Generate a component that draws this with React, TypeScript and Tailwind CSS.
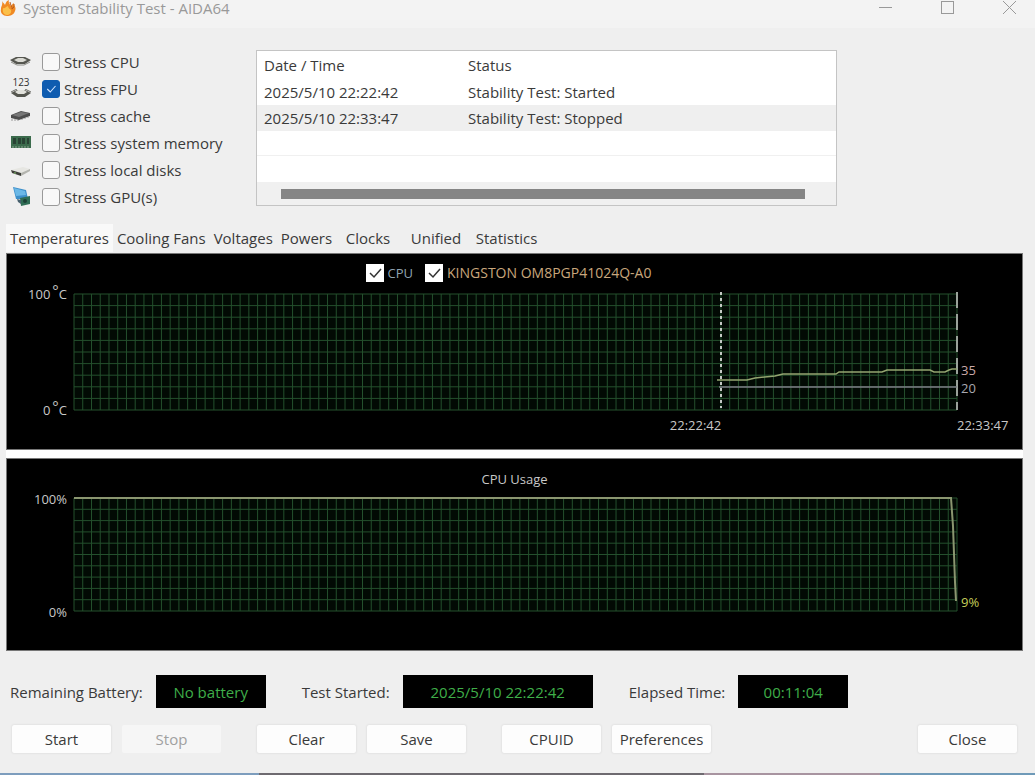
import React, { useState } from "react";
import clsx from "clsx";

const GRID_COLS = 101;
const GRID_ROWS = 10;

const tabs = [
  "Temperatures",
  "Cooling Fans",
  "Voltages",
  "Powers",
  "Clocks",
  "Unified",
  "Statistics",
];

const log = [
  { time: "2025/5/10 22:22:42", status: "Stability Test: Started" },
  { time: "2025/5/10 22:33:47", status: "Stability Test: Stopped" },
];

function FlameIcon() {
  return (
    <svg width="18" height="17" viewBox="0 0 18 17" aria-hidden="true">
      <path
        d="M2 1C3 3 4 3 5 5C6 3 6 1 9 0C8 3 10 4 11 6C12 5 12 4 14 3C13 5 17 7 15 11C14 15 10 16 7 16C3 16 0 13 1 9C1 6 3 5 2 1Z"
        fill="#f08a24"
      />
      <path
        d="M3 8C5 9 5 7 8 6C8 8 10 9 11 10C12 13 9 15 7 15C4 15 2 12 3 8Z"
        fill="#fbc04a"
      />
      <path d="M10 2C10 5 13 7 12 9C14 8 14 6 14 4" stroke="#b85a1c" fill="none" />
    </svg>
  );
}

function ChipIcon() {
  return (
    <svg width="22" height="20" viewBox="0 0 22 20" aria-hidden="true">
      <path d="M0 8L6 5H15L21 8L15 12H6Z" fill="#55564f" />
      <path d="M4 8L8 6H13L17 8L13 10H8Z" fill="#d9d9d2" />
      <path d="M1 10L7 13H14L20 10" stroke="#8b8c86" fill="none" />
    </svg>
  );
}

function FpuIcon() {
  return (
    <span className="flex h-[27px] w-[22px] flex-col items-center">
      <span className="text-[10px] leading-[14px] text-[#333]">123</span>
      <svg width="22" height="9" viewBox="0 0 22 9" aria-hidden="true">
        <path d="M1 3L7 0M21 3L15 0" stroke="#6c6d67" />
        <path d="M1 4L7 1H15L21 4L15 8H7Z" fill="#55564f" />
        <path d="M5 3L8 1H14L17 3L14 5H8Z" fill="#e2e2dc" />
      </svg>
    </span>
  );
}

function CacheIcon() {
  return (
    <svg width="22" height="20" viewBox="0 0 22 20" aria-hidden="true">
      <path d="M1 9L11 5L20 7V10L9 14L1 12Z" fill="#4d4d4d" />
      <path d="M2 9L11 6L19 7L9 11Z" fill="#777" />
      <path d="M2 13V15M5 13V15M8 14V15M12 13V14M15 12V13M18 11V12" stroke="#999" />
    </svg>
  );
}

function MemoryIcon() {
  return (
    <svg width="22" height="20" viewBox="0 0 22 20" aria-hidden="true">
      <rect x="1" y="3" width="20" height="12" fill="#3b6b4c" />
      <path d="M3 5H6V11H3ZM8 5H11V11H8ZM12 5H15V11H12ZM17 5H19V11H17Z" fill="#294334" />
      <path d="M2 14H20" stroke="#8aa58f" strokeDasharray="2 1" />
    </svg>
  );
}

function DiskIcon() {
  return (
    <svg width="22" height="20" viewBox="0 0 22 20" aria-hidden="true">
      <path d="M1 10L13 7L20 9L11 13Z" fill="#e6e6e2" />
      <path d="M11 13L20 9V11L11 16Z" fill="#b3b4ae" />
      <path d="M1 10L11 13V16L2 13Z" fill="#3f403b" />
      <path d="M4 13H6" stroke="#7fbf6a" />
    </svg>
  );
}

function GpuIcon() {
  return (
    <svg width="22" height="20" viewBox="0 0 22 20" aria-hidden="true">
      <path d="M3 0L16 3L18 12L6 12Z" fill="#3d8fca" />
      <path d="M4 1L15 4L16 8L6 9Z" fill="#6bb8e6" />
      <path d="M10 11L20 9V17L11 19Z" fill="#2f6d55" />
      <path d="M7 12L11 13V17L8 15Z" fill="#47606e" />
      <circle cx="15" cy="14" r="2" fill="#1c4136" />
    </svg>
  );
}

const stressItems = [
  { id: "cpu", label: "Stress CPU", icon: <ChipIcon /> },
  { id: "fpu", label: "Stress FPU", icon: <FpuIcon /> },
  { id: "cache", label: "Stress cache", icon: <CacheIcon /> },
  { id: "memory", label: "Stress system memory", icon: <MemoryIcon /> },
  { id: "disks", label: "Stress local disks", icon: <DiskIcon /> },
  { id: "gpu", label: "Stress GPU(s)", icon: <GpuIcon /> },
];

function Tick({ className }: { className: string }) {
  return (
    <svg
      viewBox="0 0 18 18"
      className={clsx("pointer-events-none col-start-1 row-start-1 size-[18px]", className)}
      aria-hidden="true"
    >
      <path d="M4 9L8 13L15 5" fill="none" stroke="currentColor" strokeWidth="1.5" />
    </svg>
  );
}

function Grid({ height, children }: { height: number; children: React.ReactNode }) {
  const cols = Array.from({ length: GRID_COLS + 1 }, (_, i) => (i * 883) / GRID_COLS);
  const rows = Array.from({ length: GRID_ROWS + 1 }, (_, i) => (i * height) / GRID_ROWS);
  return (
    <svg
      viewBox={`0 0 883 ${height}`}
      preserveAspectRatio="none"
      className="block w-full overflow-visible"
      style={{ height }}
      aria-hidden="true"
    >
      <rect width="883" height={height} fill="#020a04" />
      <path
        d={
          cols.map((x) => `M${x} 0V${height}`).join("") +
          rows.map((y) => `M0 ${y}H883`).join("")
        }
        stroke="#24502d"
        fill="none"
      />
      {children}
    </svg>
  );
}

function TemperatureChart() {
  const [shown, setShown] = useState({ cpu: true, ssd: true });

  return (
    <section className="border border-[#777] bg-black pt-[9px] pb-[14px] text-[13px] leading-5 text-[#c8c8c8]">
      <div className="flex h-5 items-center justify-center gap-3 pr-3">
        <label className="flex items-center gap-1 text-[#8fa3b0]">
          <span className="grid">
            <input
              type="checkbox"
              checked={shown.cpu}
              onChange={(e) => setShown({ ...shown, cpu: e.target.checked })}
              className="peer col-start-1 row-start-1 size-[18px] appearance-none bg-white"
            />
            <Tick className="text-[#333] opacity-0 peer-checked:opacity-100" />
          </span>
          CPU
        </label>
        <label className="flex items-center gap-1 text-sm text-[#c9a77c]">
          <span className="grid">
            <input
              type="checkbox"
              checked={shown.ssd}
              onChange={(e) => setShown({ ...shown, ssd: e.target.checked })}
              className="peer col-start-1 row-start-1 size-[18px] appearance-none bg-white"
            />
            <Tick className="text-[#333] opacity-0 peer-checked:opacity-100" />
          </span>
          KINGSTON OM8PGP41024Q-A0
        </label>
      </div>

      <div className="mt-px grid grid-cols-[67px_1fr_65px]">
        <div className="flex h-[136px] flex-col items-end justify-between pr-[7px]">
          <span className="flex">
            100<span className="-mt-1 ml-0.5 text-[15px]">°</span>C
          </span>
          <span className="flex">
            0<span className="-mt-1 ml-0.5 text-[15px]">°</span>C
          </span>
        </div>
        <div className="pt-[10px]">
          <Grid height={116}>
            <path d="M647 -2V114" stroke="#c4c8c4" strokeWidth="2" strokeDasharray="3 3" />
            <path d="M883 -2V116" stroke="#9aa29a" strokeWidth="2" strokeDasharray="16 6" />
            {shown.ssd && <path d="M645 93H883" stroke="#7d7d86" strokeWidth="1.5" />}
            {shown.cpu && (
              <path
                d="M643 86H673L681 84L701 82L709 80H762L765 78L808 78L813 76H856L860 78H871L875 76L878 75H883"
                stroke="#94a570"
                strokeWidth="1.5"
                fill="none"
              />
            )}
          </Grid>
          <div className="mt-[5px] w-[73.3%] text-right">22:22:42</div>
        </div>
        <div className="pt-[77px]">
          <div className="pl-1 leading-[18px] text-[#c9a9a9]">35</div>
          <div className="pl-1 leading-[18px] text-[#a8a8b0]">20</div>
          <div className="mt-[18px]">22:33:47</div>
        </div>
      </div>
    </section>
  );
}

function UsageChart() {
  return (
    <section className="border border-[#777] bg-black pt-[10px] pb-7 text-[13px] leading-5 text-[#c8c8c8]">
      <h2 className="text-center">CPU Usage</h2>
      <div className="grid grid-cols-[67px_1fr_65px]">
        <div className="flex h-[133px] flex-col items-end justify-between pr-[7px]">
          <span>100%</span>
          <span>0%</span>
        </div>
        <div className="pt-[9px]">
          <Grid height={113}>
            <path
              d="M0 0H877L879 28L881 84L882 103"
              stroke="#8b9670"
              strokeWidth="2"
              fill="none"
            />
          </Grid>
        </div>
        <div className="flex flex-col justify-end pb-[10px] pl-1 text-[#c6cf5a]">9%</div>
      </div>
    </section>
  );
}

function Readout({ label, value, wide }: { label: string; value: string; wide?: boolean }) {
  return (
    <div className="flex items-center gap-[13px]">
      <span>{label}</span>
      <output
        aria-label={label}
        className={clsx(
          "flex h-[33px] items-center justify-center bg-black text-[#3fae49]",
          wide ? "w-[190px]" : "w-[110px]"
        )}
      >
        {value}
      </output>
    </div>
  );
}

function PushButton({ children, disabled }: { children: string; disabled?: boolean }) {
  return (
    <button
      type="button"
      disabled={disabled}
      className="h-7 w-[99px] rounded-xs bg-[#fdfdfd] text-center shadow-[0_0_2px_#ccc] disabled:bg-[#f6f6f6] disabled:text-[#a0a0a0] disabled:shadow-none"
    >
      {children}
    </button>
  );
}

export default function App() {
  const [stress, setStress] = useState<string[]>(["fpu"]);
  const [tab, setTab] = useState("Temperatures");

  const toggleStress = (id: string) => {
    setStress((prev) =>
      prev.includes(id) ? prev.filter((s) => s !== id) : [...prev, id]
    );
  };

  return (
    <div className="flex min-h-screen flex-col bg-[#efefef] font-['Open_Sans',sans-serif] text-[15px] leading-5 text-[#3a3a3a]">
      {/* Title bar */}
      <header className="flex h-7 items-start bg-[#f3f3f3] text-[#999]">
        <FlameIcon />
        <h1 className="ml-[5px] flex-1 leading-4">System Stability Test - AIDA64</h1>
        <div className="flex gap-12 pr-[18px]">
          <button type="button" aria-label="Minimize">
            <svg width="14" height="16" fill="none" stroke="currentColor">
              <path d="M0 7.5H13" />
            </svg>
          </button>
          <button type="button" aria-label="Maximize">
            <svg width="14" height="16" fill="none" stroke="currentColor">
              <rect x="0.5" y="1.5" width="12" height="12" />
            </svg>
          </button>
          <button type="button" aria-label="Close window">
            <svg width="14" height="16" fill="none" stroke="currentColor">
              <path d="M0 1L13 14M13 1L0 14" />
            </svg>
          </button>
        </div>
      </header>

      {/* Stress options and event log */}
      <div className="flex items-start pt-5 pl-[10px]">
        <div className="w-[246px]">
          {stressItems.map((item) => (
            <div key={item.id} className="flex h-[27px] items-center">
              <span className="w-8">{item.icon}</span>
              <label className="flex items-center gap-1">
                <span className="grid">
                  <input
                    type="checkbox"
                    checked={stress.includes(item.id)}
                    onChange={() => toggleStress(item.id)}
                    className="peer col-start-1 row-start-1 size-[18px] appearance-none rounded-[3px] border border-[#999] bg-[#f8f8f8] checked:border-[#0f5cb0] checked:bg-[#0f5cb0]"
                  />
                  <Tick className="scale-75 text-[#cfe2ff] opacity-0 peer-checked:opacity-100" />
                </span>
                {item.label}
              </label>
            </div>
          ))}
        </div>

        <div className="mt-0.5 w-[56.7%] border border-[#c4c4c4] bg-white">
          <table className="w-full table-fixed">
            <thead>
              <tr className="h-7">
                <th className="w-[204px] pl-[7px] text-left font-normal">Date / Time</th>
                <th className="pl-[7px] text-left font-normal">Status</th>
              </tr>
            </thead>
            <tbody>
              {log.map((row) => (
                <tr key={row.time} className="h-[26px] even:bg-[#efefef]">
                  <td className="pl-[7px]">{row.time}</td>
                  <td className="pl-[7px]">{row.status}</td>
                </tr>
              ))}
            </tbody>
          </table>
          <div className="h-[25px] border-b border-[#f0f0f0]" />
          <div className="h-[26px]" />
          <div className="bg-[#f0f0f0] pt-[7px] pr-[31px] pb-[6px] pl-6">
            <div className="h-[10px] bg-[#858585]" />
          </div>
        </div>
      </div>

      {/* Tabs */}
      <div role="tablist" className="mt-[14px] flex pb-px pl-[6px]">
        {tabs.map((name) => (
          <button
            key={name}
            type="button"
            role="tab"
            aria-selected={tab === name}
            onClick={() => setTab(name)}
            className={clsx(
              "h-[28px] min-w-[65px] px-1 text-left",
              tab === name && "bg-[#f9f9f9]"
            )}
          >
            {name}
          </button>
        ))}
      </div>

      <main className="mr-3 ml-[6px] flex flex-col gap-2 bg-white">
        <TemperatureChart />
        <UsageChart />
      </main>

      {/* Status line */}
      <div className="mt-6 flex items-center gap-9 pl-[10px]">
        <Readout label="Remaining Battery:" value="No battery" />
        <Readout label="Test Started:" value="2025/5/10 22:22:42" wide />
        <Readout label="Elapsed Time:" value="00:11:04" />
      </div>

      <div className="mt-[17px] flex gap-9 pr-[18px] pl-3">
        <div className="flex gap-[11px]">
          <PushButton>Start</PushButton>
          <PushButton disabled>Stop</PushButton>
        </div>
        <div className="flex gap-[11px]">
          <PushButton>Clear</PushButton>
          <PushButton>Save</PushButton>
        </div>
        <div className="flex flex-1 gap-[11px]">
          <PushButton>CPUID</PushButton>
          <PushButton>Preferences</PushButton>
        </div>
        <PushButton>Close</PushButton>
      </div>

      {/* Desktop edge under the window */}
      <div className="mt-auto flex h-[2px]">
        <div className="w-1/4 bg-[#7d9dbd]" />
        <div className="w-[43%] bg-[#6e6a70]" />
        <div className="w-[17%] bg-[#a894a0]" />
        <div className="flex-1 bg-[#6f9ab8]" />
      </div>
    </div>
  );
}
